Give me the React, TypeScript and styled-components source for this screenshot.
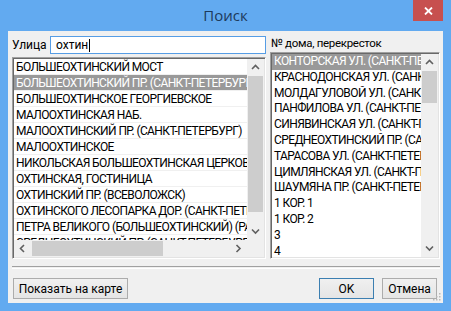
import styled, { createGlobalStyle } from "styled-components"

const GlobalStyle = createGlobalStyle`
    html, body {
        margin: 0;
        padding: 0;
        background: #ffffff;
    }
    body {
        font-family: Roboto, "Liberation Sans", Arial, sans-serif;
        font-size: 12px;
        color: #000000;
    }
`

const Frame = styled.div`
    width: 451px;
    height: 311px;
    background: #62aaf0;
    display: flex;
    flex-direction: column;
    box-sizing: border-box;
`

const TitleBar = styled.div`
    height: 31px;
    display: grid;
    grid-template-columns: 1fr auto 1fr;
    align-items: start;
`

const Title = styled.div`
    grid-column: 2;
    font-family: "Open Sans", sans-serif;
    font-size: 15px;
    line-height: 31px;
    color: #1d3a5c;
`

const CloseButton = styled.div`
    grid-column: 3;
    justify-self: end;
    margin-right: 8px;
    width: 30px;
    height: 21px;
    background: #c7504f;
    display: flex;
    align-items: center;
    justify-content: center;
`

const Client = styled.div`
    flex: 1;
    margin: 0 8px 8px;
    background: #f0f0f0;
    display: flex;
    flex-direction: column;
    position: relative;
`

const Panels = styled.div`
    display: grid;
    grid-template-columns: 254px 170px;
    column-gap: 4px;
    padding: 5px 3px 0 4px;
    height: 223px;
`

const Column = styled.div`
    display: flex;
    flex-direction: column;
    min-height: 0;
`

const FieldRow = styled.div`
    display: flex;
    align-items: center;
    height: 18px;
    margin-bottom: 3px;
`

const Label = styled.span`
    width: 38px;
    white-space: nowrap;
`

const Input = styled.div`
    flex: 1;
    height: 18px;
    box-sizing: border-box;
    border: 1px solid #569de5;
    background: #ffffff;
    padding-left: 5px;
    line-height: 16px;
    display: flex;
    align-items: center;
`

const Caret = styled.span`
    display: inline-block;
    width: 1px;
    height: 13px;
    background: #000000;
    margin-left: 1px;
`

const RightLabel = styled.div`
    height: 16px;
    line-height: 14px;
    padding-left: 1px;
    white-space: nowrap;
    font-size: 11.5px;
    letter-spacing: -0.3px;
`

const ListBox = styled.div<{ $hscroll?: boolean }>`
    flex: 1;
    min-height: 0;
    box-sizing: border-box;
    border-style: solid;
    border-width: 1px;
    border-color: #a0a0a0 #ffffff #ffffff #a0a0a0;
    box-shadow: inset 1px 1px 0 #696969, inset -1px -1px 0 #e3e3e3;
    padding: 1px;
    display: grid;
    grid-template-columns: 1fr 17px;
    grid-template-rows: ${(p) => (p.$hscroll ? "1fr 17px" : "1fr")};
`

const Rows = styled.div`
    background: #ffffff;
    overflow: hidden;
    min-width: 0;
    min-height: 0;
`

const Row = styled.div<{ $selected?: boolean; $lined?: boolean; $h: number }>`
    height: ${(p) => p.$h}px;
    line-height: ${(p) => p.$h}px;
    box-sizing: border-box;
    padding-left: 2px;
    white-space: nowrap;
    overflow: hidden;
    font-size: 12px;
    letter-spacing: -0.6px;
    background: ${(p) => (p.$selected ? "#999999" : "#ffffff")};
    color: ${(p) => (p.$selected ? "#ffffff" : "#000000")};
    border-bottom: ${(p) => (p.$lined ? "1px solid #f0f0f0" : "none")};
`

const VScroll = styled.div`
    background: #f0f0f0;
    display: grid;
    grid-template-rows: 17px 1fr 17px;
    min-height: 0;
`

const HScroll = styled.div`
    background: #f0f0f0;
    display: grid;
    grid-template-columns: 17px 1fr 17px;
`

const Corner = styled.div`
    background: #f0f0f0;
`

const Arrow = styled.div`
    display: flex;
    align-items: center;
    justify-content: center;
`

const Track = styled.div<{ $horizontal?: boolean }>`
    display: flex;
    flex-direction: ${(p) => (p.$horizontal ? "row" : "column")};
    min-height: 0;
`

const Thumb = styled.div<{ $horizontal?: boolean }>`
    background: #cdcdcd;
    ${(p) => (p.$horizontal ? "height: 15px; margin-top: 1px;" : "width: 15px; margin-left: 1px;")}
`

const Separator = styled.div`
    margin: 7px 3px 0 4px;
    height: 1px;
    border-top: 1px solid #a0a0a0;
    border-bottom: 1px solid #ffffff;
`

const ButtonBar = styled.div`
    display: flex;
    align-items: center;
    padding: 0 6px 0 5px;
    margin-top: 9px;
    gap: 8px;
`

const Spacer = styled.div`
    flex: 1;
`

const Button = styled.div<{ $default?: boolean; $w: number }>`
    width: ${(p) => p.$w}px;
    height: 21px;
    box-sizing: border-box;
    border: 1px solid ${(p) => (p.$default ? "#3c7fb1" : "#acacac")};
    background: linear-gradient(#f0f0f0, #e5e5e5);
    display: flex;
    align-items: center;
    justify-content: center;
    white-space: nowrap;
`

const Grip = styled.svg`
    position: absolute;
    right: 2px;
    bottom: 2px;
`

type Dir = "up" | "down" | "left" | "right"

function Chevron({ dir }: { dir: Dir }) {
    const d = {
        up: "M1 5 L4.5 1.5 L8 5",
        down: "M1 1.5 L4.5 5 L8 1.5",
        left: "M5 1 L1.5 4.5 L5 8",
        right: "M1.5 1 L5 4.5 L1.5 8",
    }[dir]
    const vertical = dir === "up" || dir === "down"
    return (
        <svg width={vertical ? 9 : 7} height={vertical ? 7 : 9} viewBox={vertical ? "0 0 9 7" : "0 0 7 9"}>
            <path d={d} fill="none" stroke="#606060" strokeWidth="1.6" />
        </svg>
    )
}

function VScrollBar({ offset, size }: { offset: number; size: number }) {
    return (
        <VScroll>
            <Arrow><Chevron dir="up" /></Arrow>
            <Track>
                <Thumb style={{ marginTop: offset, height: size }} />
            </Track>
            <Arrow><Chevron dir="down" /></Arrow>
        </VScroll>
    )
}

function HScrollBar({ offset, size }: { offset: number; size: number }) {
    return (
        <HScroll>
            <Arrow><Chevron dir="left" /></Arrow>
            <Track $horizontal>
                <Thumb $horizontal style={{ marginLeft: offset, width: size }} />
            </Track>
            <Arrow><Chevron dir="right" /></Arrow>
        </HScroll>
    )
}

const streets = [
    "БОЛЬШЕОХТИНСКИЙ МОСТ",
    "БОЛЬШЕОХТИНСКИЙ ПР. (САНКТ-ПЕТЕРБУРГ)",
    "БОЛЬШЕОХТИНСКОЕ ГЕОРГИЕВСКОЕ",
    "МАЛООХТИНСКАЯ НАБ.",
    "МАЛООХТИНСКИЙ ПР. (САНКТ-ПЕТЕРБУРГ)",
    "МАЛООХТИНСКОЕ",
    "НИКОЛЬСКАЯ БОЛЬШЕОХТИНСКАЯ ЦЕРКОВЬ",
    "ОХТИНСКАЯ, ГОСТИНИЦА",
    "ОХТИНСКИЙ ПР. (ВСЕВОЛОЖСК)",
    "ОХТИНСКОГО ЛЕСОПАРКА ДОР. (САНКТ-ПЕТЕРБУРГ)",
    "ПЕТРА ВЕЛИКОГО (БОЛЬШЕОХТИНСКИЙ) (РАЙОН)",
    "СРЕДНЕОХТИНСКИЙ ПР. (САНКТ-ПЕТЕРБУРГ)",
]

const houses = [
    "КОНТОРСКАЯ УЛ. (САНКТ-ПЕТЕРБУРГ)",
    "КРАСНОДОНСКАЯ УЛ. (САНКТ-ПЕТЕРБУРГ)",
    "МОЛДАГУЛОВОЙ УЛ. (САНКТ-ПЕТЕРБУРГ)",
    "ПАНФИЛОВА УЛ. (САНКТ-ПЕТЕРБУРГ)",
    "СИНЯВИНСКАЯ УЛ. (САНКТ-ПЕТЕРБУРГ)",
    "СРЕДНЕОХТИНСКИЙ ПР. (САНКТ-ПЕТЕРБУРГ)",
    "ТАРАСОВА УЛ. (САНКТ-ПЕТЕРБУРГ)",
    "ЦИМЛЯНСКАЯ УЛ. (САНКТ-ПЕТЕРБУРГ)",
    "ШАУМЯНА ПР. (САНКТ-ПЕТЕРБУРГ)",
    "1 КОР. 1",
    "1 КОР. 2",
    "3",
    "4",
]

export default function App() {
    return (
        <>
            <GlobalStyle />
            <Frame>
                <TitleBar>
                    <Title>Поиск</Title>
                    <CloseButton>
                        <svg width="9" height="8" viewBox="0 0 9 8">
                            <path d="M1 0.5 L8 7.5 M8 0.5 L1 7.5" stroke="#ffffff" strokeWidth="1.8" />
                        </svg>
                    </CloseButton>
                </TitleBar>
                <Client>
                    <Panels>
                        <Column>
                            <FieldRow>
                                <Label>Улица</Label>
                                <Input>охтин<Caret /></Input>
                            </FieldRow>
                            <ListBox $hscroll>
                                <Rows>
                                    {streets.map((s, i) => (
                                        <Row key={s} $h={16} $lined $selected={i === 1}>{s}</Row>
                                    ))}
                                </Rows>
                                <VScrollBar offset={0} size={136} />
                                <HScrollBar offset={1} size={131} />
                                <Corner />
                            </ListBox>
                        </Column>
                        <Column>
                            <RightLabel>№ дома, перекресток</RightLabel>
                            <ListBox>
                                <Rows>
                                    {houses.map((s, i) => (
                                        <Row key={s} $h={15.8} $selected={i === 0}>{s}</Row>
                                    ))}
                                </Rows>
                                <VScrollBar offset={0} size={32} />
                            </ListBox>
                        </Column>
                    </Panels>
                    <Separator />
                    <ButtonBar>
                        <Button $w={115}>Показать на карте</Button>
                        <Spacer />
                        <Button $w={55} $default>OK</Button>
                        <Button $w={55}>Отмена</Button>
                    </ButtonBar>
                    <Grip width="10" height="10" viewBox="0 0 10 10">
                        {[[8, 2], [5, 5], [8, 5], [2, 8], [5, 8], [8, 8]].map(([x, y]) => (
                            <rect key={`${x}-${y}`} x={x} y={y} width="1.5" height="1.5" fill="#b8b8b8" />
                        ))}
                    </Grip>
                </Client>
            </Frame>
        </>
    )
}
